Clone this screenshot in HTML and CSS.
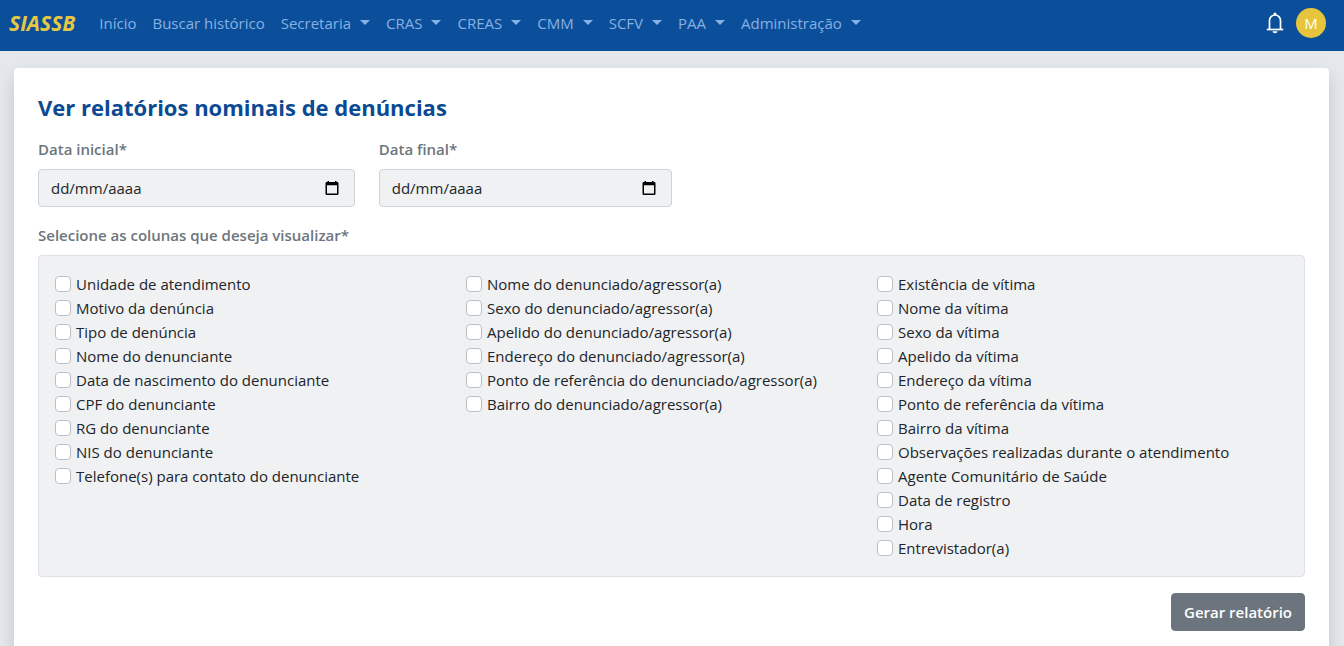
FILE: index.html
```html
<!DOCTYPE html>
<html lang="pt-BR">
<head>
<meta charset="utf-8">
<meta name="viewport" content="width=device-width, initial-scale=1">
<title>SIASSB</title>
<link rel="stylesheet" href="styles.css">
</head>
<body>
<header class="topbar">
  <a class="brand" href="#">SIASSB</a>
  <nav class="menu">
    <a class="menu-link" href="#">Início</a>
    <a class="menu-link" href="#">Buscar histórico</a>
    <button class="menu-link dropdown" type="button">Secretaria</button>
    <button class="menu-link dropdown" type="button">CRAS</button>
    <button class="menu-link dropdown" type="button">CREAS</button>
    <button class="menu-link dropdown" type="button">CMM</button>
    <button class="menu-link dropdown" type="button">SCFV</button>
    <button class="menu-link dropdown" type="button">PAA</button>
    <button class="menu-link dropdown" type="button">Administração</button>
  </nav>
  <div class="user">
    <button class="bell" type="button" aria-label="Notificações">
      <svg width="18" height="22" viewBox="0 0 18 22" fill="none" stroke="#fff">
        <path d="M3.500 17V8.500a5.500 5.500 0 0 1 11 0V17" stroke-width="1.700"/>
        <path d="M.8 17.500h16.400" stroke-width="1.700"/>
        <circle cx="9" cy="2" r="1.500" fill="#fff" stroke="none"/>
        <path d="M6.500 19.200h5a2.500 2 0 0 1-5 0z" fill="#fff" stroke="none"/>
      </svg>
    </button>
    <button class="avatar" type="button">M</button>
  </div>
</header>
<main class="page">
  <form class="card">
    <h1 class="title">Ver relatórios nominais de denúncias</h1>
    <div class="dates">
      <div class="field">
        <label class="label" for="inicio">Data inicial*</label>
        <div class="control">
          <input class="date" id="inicio" type="text" placeholder="dd/mm/aaaa">
          <button class="picker" type="button" aria-label="Abrir calendário">
            <svg width="14" height="14" viewBox="0 0 14 14"><path fill="#000" fill-rule="evenodd" d="M2.500 0H4v1h6V0h1.500v1h.7A1.300 1.300 0 0 1 13.500 2.300v10.400a1.300 1.300 0 0 1-1.300 1.300H1.800A1.300 1.300 0 0 1 .5 12.700V2.300A1.300 1.300 0 0 1 1.800 1h.7zM2 4.300v8.200h10V4.300z"/></svg>
          </button>
        </div>
      </div>
      <div class="field">
        <label class="label" for="fim">Data final*</label>
        <div class="control">
          <input class="date" id="fim" type="text" placeholder="dd/mm/aaaa">
          <button class="picker" type="button" aria-label="Abrir calendário">
            <svg width="14" height="14" viewBox="0 0 14 14"><path fill="#000" fill-rule="evenodd" d="M2.500 0H4v1h6V0h1.500v1h.7A1.300 1.300 0 0 1 13.500 2.300v10.400a1.300 1.300 0 0 1-1.300 1.300H1.800A1.300 1.300 0 0 1 .5 12.700V2.300A1.300 1.300 0 0 1 1.800 1h.7zM2 4.300v8.200h10V4.300z"/></svg>
          </button>
        </div>
      </div>
    </div>
    <div class="label" id="colunas">Selecione as colunas que deseja visualizar*</div>
    <div class="columns" role="group" aria-labelledby="colunas">
      <div class="column">
        <label class="option"><input class="check" type="checkbox">Unidade de atendimento</label>
        <label class="option"><input class="check" type="checkbox">Motivo da denúncia</label>
        <label class="option"><input class="check" type="checkbox">Tipo de denúncia</label>
        <label class="option"><input class="check" type="checkbox">Nome do denunciante</label>
        <label class="option"><input class="check" type="checkbox">Data de nascimento do denunciante</label>
        <label class="option"><input class="check" type="checkbox">CPF do denunciante</label>
        <label class="option"><input class="check" type="checkbox">RG do denunciante</label>
        <label class="option"><input class="check" type="checkbox">NIS do denunciante</label>
        <label class="option"><input class="check" type="checkbox">Telefone(s) para contato do denunciante</label>
      </div>
      <div class="column">
        <label class="option"><input class="check" type="checkbox">Nome do denunciado/agressor(a)</label>
        <label class="option"><input class="check" type="checkbox">Sexo do denunciado/agressor(a)</label>
        <label class="option"><input class="check" type="checkbox">Apelido do denunciado/agressor(a)</label>
        <label class="option"><input class="check" type="checkbox">Endereço do denunciado/agressor(a)</label>
        <label class="option"><input class="check" type="checkbox">Ponto de referência do denunciado/agressor(a)</label>
        <label class="option"><input class="check" type="checkbox">Bairro do denunciado/agressor(a)</label>
      </div>
      <div class="column">
        <label class="option"><input class="check" type="checkbox">Existência de vítima</label>
        <label class="option"><input class="check" type="checkbox">Nome da vítima</label>
        <label class="option"><input class="check" type="checkbox">Sexo da vítima</label>
        <label class="option"><input class="check" type="checkbox">Apelido da vítima</label>
        <label class="option"><input class="check" type="checkbox">Endereço da vítima</label>
        <label class="option"><input class="check" type="checkbox">Ponto de referência da vítima</label>
        <label class="option"><input class="check" type="checkbox">Bairro da vítima</label>
        <label class="option"><input class="check" type="checkbox">Observações realizadas durante o atendimento</label>
        <label class="option"><input class="check" type="checkbox">Agente Comunitário de Saúde</label>
        <label class="option"><input class="check" type="checkbox">Data de registro</label>
        <label class="option"><input class="check" type="checkbox">Hora</label>
        <label class="option"><input class="check" type="checkbox">Entrevistador(a)</label>
      </div>
    </div>
    <div class="actions">
      <button class="submit" type="submit">Gerar relatório</button>
    </div>
  </form>
</main>
</body>
</html>
```
FILE: styles.css
```css
* {
  box-sizing: border-box;
}

body {
  margin: 0;
  background: #e4e7ec;
  color: #212529;
  font-family: "Segoe UI", "Open Sans", "Noto Sans", sans-serif;
  font-size: 15px;
  line-height: 24px;
}

button,
input {
  margin: 0;
  font: inherit;
}

.topbar {
  display: flex;
  align-items: center;
  padding: 8px 18px 13px 9px;
  background: #0b4f9b;
}

.brand {
  margin-right: 16px;
  color: #e6c744;
  font-size: 21px;
  font-style: italic;
  font-weight: 700;
  text-decoration: none;
}

.menu {
  display: flex;
}

.menu-link {
  display: flex;
  align-items: center;
  padding: 0 8px;
  border: 0;
  background: none;
  color: #87b1e2;
  text-decoration: none;
  white-space: nowrap;
}

.dropdown::after {
  content: "";
  margin-left: 9px;
  margin-bottom: 2px;
  border: 5px solid transparent;
  border-top-color: currentColor;
  border-bottom: 0;
}

.user {
  display: flex;
  align-items: center;
  gap: 12px;
  margin-left: auto;
}

.bell {
  display: flex;
  padding: 0;
  border: 0;
  background: none;
}

.avatar {
  width: 30px;
  height: 30px;
  padding: 0;
  border: 0;
  border-radius: 50%;
  background: #e6c53c;
  color: #fff;
}

.page {
  padding: 17px 15px 24px 14px;
}

.card {
  padding: 24px;
  border-radius: 4px;
  background: #fff;
  box-shadow: 0 8px 16px rgba(0, 0, 0, 0.15);
}

.title {
  margin: 0 0 15px;
  color: #0b4a92;
  font-size: 22px;
  font-weight: 700;
  line-height: 30px;
}

.dates {
  display: grid;
  grid-template-columns: 25% calc(25% - 24px);
  gap: 24px;
  margin-bottom: 16px;
}

.label {
  display: block;
  margin-bottom: 8px;
  color: #6c757d;
  font-weight: 600;
}

.control {
  display: flex;
  align-items: center;
  padding: 6px 15px 6px 12px;
  border: 1px solid #ced4da;
  border-radius: 4px;
  background: #f0f1f3;
}

.date {
  flex: 1;
  min-width: 0;
  height: 24px;
  padding: 0;
  border: 0;
  outline: 0;
  background: none;
  color: #212529;
}

.date::placeholder {
  color: #212529;
  opacity: 1;
}

.picker {
  display: flex;
  padding: 0;
  border: 0;
  background: none;
}

.columns {
  display: grid;
  grid-template-columns: repeat(3, 1fr);
  padding: 16px;
  border: 1px solid #dee2e6;
  border-radius: 4px;
  background: #f0f1f3;
}

.option {
  display: flex;
  align-items: center;
  gap: 5px;
}

.check {
  flex: none;
  width: 16px;
  height: 16px;
  appearance: none;
  border: 1px solid #bcbfc3;
  border-radius: 4px;
  background: #fff;
}

.check:checked {
  background: #0b4f9b;
}

.actions {
  display: flex;
  justify-content: flex-end;
  margin-top: 16px;
}

.submit {
  padding: 6px 12px;
  border: 1px solid #6c757d;
  border-radius: 4px;
  background: #6c757d;
  color: #fff;
  font-weight: 600;
}
```
